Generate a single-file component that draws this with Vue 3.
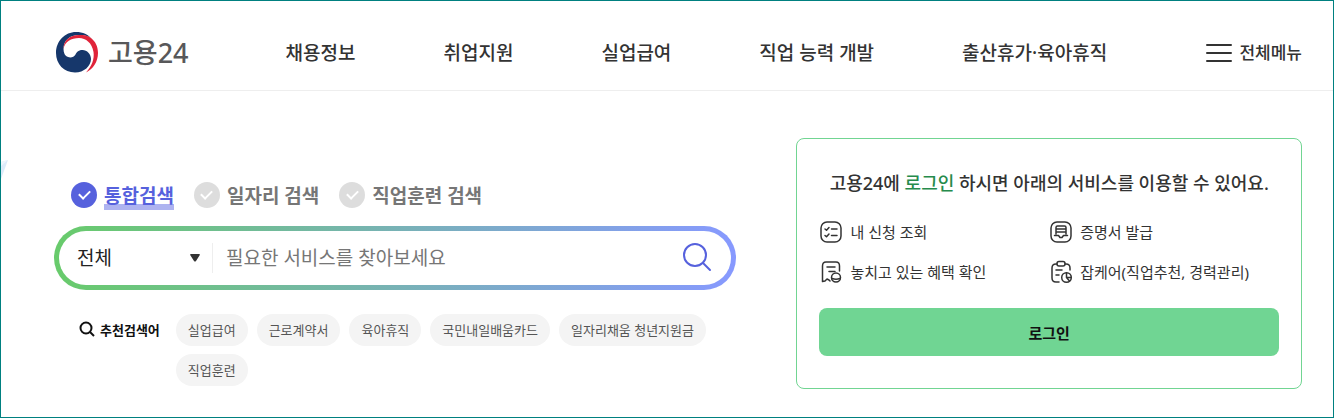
<template>
  <div class="page">
    <header class="header">
      <a href="#" class="logo">
        <svg class="logo-mark" viewBox="0 0 42 42" aria-hidden="true">
          <path fill="#16376b" d="M36 7C32 2.500 27 0 20 0C9 0 0 9 0 21C0 32 8 40.500 19 40.500C28 40.500 35 34 35 27C35 22 31 18 26.500 18C22 18 20.500 20.500 19.500 22.500C18 25 15 26 12 25C9 24 7.500 21 7.500 17C7.500 8 14 3 23 3C29 3 33 4 36 7Z" />
          <path fill="#e0243a" d="M7.500 17C7.500 8 14 3 23 3C28 3 32 3.500 35 6C39.500 9.500 42 14.500 42 21C42 30 37 37 30 40.500C36 34 38.500 27 37.500 20C36 11 30 6 23 6C15 6 9 9.500 7.500 17Z" />
        </svg>
        <span class="logo-text">고용24</span>
      </a>
      <nav class="nav">
        <a v-for="item in menus" :key="item" href="#" class="nav-link">{{ item }}</a>
      </nav>
      <button type="button" class="all-menu">
        <svg class="all-menu-icon" viewBox="0 0 28 20" aria-hidden="true">
          <path d="M2 2H26M2 10H26M2 18H26" />
        </svg>
        전체메뉴
      </button>
    </header>

    <svg class="deco" viewBox="0 0 7 20" aria-hidden="true">
      <path fill="#dcebfa" d="M0 2L7 0L0 19Z" />
      <path fill="#eef5fd" d="M0 2L7 0L0 6Z" />
    </svg>

    <main class="main">
      <section class="search">
        <div class="search-types">
          <label
            v-for="type in searchTypes"
            :key="type"
            class="search-type"
            :class="{ active: selectedType === type }"
          >
            <input v-model="selectedType" type="radio" name="searchType" :value="type" />
            <span>{{ type }}</span>
          </label>
        </div>

        <form class="search-box" @submit.prevent>
          <div class="category">
            <select v-model="category" aria-label="검색 분류">
              <option value="all">전체</option>
            </select>
            <svg class="category-arrow" viewBox="0 0 10 8" aria-hidden="true">
              <path d="M1 0H9Q10.500 0 9.500 1.500L6 7Q5 8 4 7L0.500 1.500Q-0.500 0 1 0Z" />
            </svg>
          </div>
          <input v-model="keyword" class="search-input" type="text" aria-label="검색어" placeholder="필요한 서비스를 찾아보세요" />
          <button type="submit" class="search-btn" aria-label="검색">
            <svg viewBox="0 0 30 30" aria-hidden="true">
              <circle cx="13" cy="13" r="11" />
              <path d="M21 21L28 28" />
            </svg>
          </button>
        </form>

        <div class="recommend">
          <strong class="recommend-title">
            <svg viewBox="0 0 16 16" aria-hidden="true">
              <circle cx="7" cy="7" r="5.500" />
              <path d="M11 11L15 15" />
            </svg>
            추천검색어
          </strong>
          <ul class="keywords">
            <li v-for="word in keywords" :key="word">
              <a href="#" class="keyword">{{ word }}</a>
            </li>
          </ul>
        </div>
      </section>

      <section class="login-card">
        <h2 class="login-title">고용24에 <em>로그인</em> 하시면 아래의 서비스를 이용할 수 있어요.</h2>
        <ul class="services">
          <li>
            <svg viewBox="0 0 24 24" aria-hidden="true">
              <rect x="2" y="2" width="20" height="20" rx="6" />
              <path d="M6 9L7.500 10.300L10 7.500M6 15.500L7.500 16.800L10 14M12.500 9H18M12.500 15.500H18" />
            </svg>
            내 신청 조회
          </li>
          <li>
            <svg viewBox="0 0 24 24" aria-hidden="true">
              <rect x="2" y="2" width="20" height="20" rx="6" />
              <path d="M7 14V7.500Q7 6 8.500 6H15.500Q17 6 17 7.500V14M7 9H17M7 12H17M5.500 15.500H9.500L11 17.500H13L14.500 15.500H18.500" />
            </svg>
            증명서 발급
          </li>
          <li>
            <svg viewBox="0 0 24 24" aria-hidden="true">
              <path d="M10 20L8 19L6 21L3.500 21.500V6Q3.500 2 7 2H17Q20.500 2 20.500 6V11M8 7H16M10 11.500H16M10 20L11 21" />
              <circle cx="17" cy="17.500" r="4.500" />
              <path d="M13 18.500Q17 20 21 18.500" />
            </svg>
            놓치고 있는 혜택 확인
          </li>
          <li>
            <svg viewBox="0 0 24 24" aria-hidden="true">
              <path d="M10 22H7Q3 22 3 18V8Q3 4 7 4H8M16 4H17Q21 4 21 8V10M7 10H13M7 15H10" />
              <rect x="8" y="1.500" width="8" height="4.500" rx="2" />
              <circle cx="17.500" cy="17.500" r="4.800" />
              <path d="M17.500 12.700V17.500H22.300M17.500 17.500L20.500 21" />
            </svg>
            잡케어(직업추천, 경력관리)
          </li>
        </ul>
        <button type="button" class="login-btn">로그인</button>
      </section>
    </main>
  </div>
</template>

<script setup>
import { ref } from 'vue'

const menus = ['채용정보', '취업지원', '실업급여', '직업 능력 개발', '출산휴가·육아휴직']
const searchTypes = ['통합검색', '일자리 검색', '직업훈련 검색']
const keywords = ['실업급여', '근로계약서', '육아휴직', '국민내일배움카드', '일자리채움 청년지원금', '직업훈련']

const selectedType = ref('통합검색')
const category = ref('all')
const keyword = ref('')
</script>

<style>
body {
  margin: 0;
  background: #fff;
}
</style>

<style scoped>
.page,
.page * {
  box-sizing: border-box;
}

.page {
  position: relative;
  min-height: 100vh;
  border: 1px solid #008080;
  background: #fff;
  color: #333;
  font-family: 'Noto Sans', 'Noto Sans CJK KR', sans-serif;
}

button,
input,
select {
  font-family: inherit;
}

a {
  color: inherit;
  text-decoration: none;
}

ul {
  margin: 0;
  padding: 0;
  list-style: none;
}

svg {
  display: block;
  flex-shrink: 0;
}

.header {
  display: flex;
  align-items: center;
  height: 90px;
  padding: 14px 31px 0 55px;
  border-bottom: 1px solid #eee;
  white-space: nowrap;
}

.logo {
  display: flex;
  align-items: center;
  gap: 10px;
}

.logo-mark {
  width: 42px;
  height: 42px;
}

.logo-text {
  color: #58585a;
  font-size: 27px;
  font-weight: 500;
  line-height: 40px;
}

.nav {
  display: flex;
  gap: 88px;
  margin-left: 97px;
}

.nav-link {
  font-size: 19px;
  font-weight: 500;
  line-height: 28px;
}

.all-menu {
  display: flex;
  align-items: center;
  gap: 6px;
  margin-left: auto;
  padding: 0;
  border: 0;
  background: none;
  color: #333;
  font-size: 17px;
  font-weight: 500;
  line-height: 28px;
  cursor: pointer;
}

.all-menu-icon {
  width: 28px;
  height: 20px;
  fill: none;
  stroke: #333;
  stroke-width: 2;
  stroke-linecap: round;
}

.deco {
  position: absolute;
  top: 159px;
  left: 0;
  width: 7px;
  height: 20px;
}

.main {
  display: grid;
  grid-template-columns: 27fr 20fr;
  gap: 60px;
  align-items: start;
  padding: 47px 31px 28px 53px;
}

.search {
  padding-top: 42px;
}

.search-types {
  display: flex;
  gap: 20px;
  padding-left: 17px;
}

.search-type {
  display: flex;
  align-items: center;
  gap: 7px;
  color: #767676;
  font-size: 19px;
  font-weight: 700;
  line-height: 28px;
  cursor: pointer;
}

.search-type input {
  display: flex;
  justify-content: center;
  width: 26px;
  height: 26px;
  margin: 0;
  padding-top: 8px;
  border-radius: 50%;
  background: #ddd;
  appearance: none;
  cursor: pointer;
}

.search-type input::after {
  content: '';
  box-sizing: border-box;
  width: 11px;
  height: 7px;
  border-bottom: 2px solid #fff;
  border-left: 2px solid #fff;
  transform: rotate(-45deg);
}

.search-type span {
  padding-top: 2px;
}

.search-type.active {
  color: #5661dd;
}

.search-type.active input {
  background: #5661dd;
}

.search-type.active span {
  background: linear-gradient(#aeb3f0, #aeb3f0) 0 100% / 100% 6px no-repeat;
}

.search-box {
  display: flex;
  align-items: center;
  height: 64px;
  margin-top: 16px;
  padding: 0 19px 0 18px;
  border: 5px solid transparent;
  border-radius: 32px;
  background:
    linear-gradient(#fff, #fff) padding-box,
    linear-gradient(90deg, #68cb6b, #8799ff) border-box;
}

.category {
  display: flex;
  position: relative;
  align-items: center;
  width: 136px;
  height: 30px;
  border-right: 1px solid #eee;
}

.category select {
  width: 100%;
  height: 30px;
  padding: 0;
  border: 0;
  background: none;
  color: #222;
  font-size: 19px;
  appearance: none;
}

.category-arrow {
  position: absolute;
  right: 12px;
  width: 10px;
  height: 8px;
  fill: #333;
  pointer-events: none;
}

.search-input {
  flex: 1;
  min-width: 0;
  height: 40px;
  padding: 0 13px;
  border: 0;
  outline: 0;
  background: none;
  color: #222;
  font-size: 19px;
}

.search-input::placeholder {
  color: #767676;
}

.search-btn {
  padding: 0 0 2px;
  border: 0;
  background: none;
  cursor: pointer;
}

.search-btn svg {
  width: 30px;
  height: 30px;
  fill: none;
  stroke: #5661dd;
  stroke-width: 2;
  stroke-linecap: round;
}

.recommend {
  display: flex;
  gap: 16px;
  margin-top: 24px;
  padding-left: 25px;
}

.recommend-title {
  display: flex;
  align-items: center;
  gap: 5px;
  height: 30px;
  color: #111;
  font-size: 13px;
  font-weight: 700;
  white-space: nowrap;
}

.recommend-title svg {
  width: 16px;
  height: 16px;
  fill: none;
  stroke: #111;
  stroke-width: 2;
}

.keywords {
  display: flex;
  flex-wrap: wrap;
  gap: 8px 9px;
}

.keyword {
  display: block;
  padding: 0 12px;
  border-radius: 16px;
  background: #f4f4f4;
  color: #555;
  font-size: 13px;
  line-height: 32px;
}

.login-card {
  padding: 30px 22px 32px;
  border: 1px solid #71d592;
  border-radius: 8px;
}

.login-title {
  margin: 0;
  font-size: 18px;
  font-weight: 500;
  line-height: 28px;
  text-align: center;
  white-space: nowrap;
}

.login-title em {
  color: #268b4c;
  font-style: normal;
}

.services {
  display: grid;
  grid-template-columns: 1fr 1fr;
  gap: 16px 0;
  margin-top: 23px;
}

.services li {
  display: flex;
  align-items: center;
  gap: 7px;
  font-size: 15px;
  line-height: 24px;
  white-space: nowrap;
}

.services svg {
  width: 24px;
  height: 24px;
  fill: none;
  stroke: #333;
  stroke-width: 1.500;
  stroke-linecap: round;
  stroke-linejoin: round;
}

.login-btn {
  display: block;
  width: 100%;
  height: 48px;
  margin-top: 24px;
  border: 0;
  border-radius: 8px;
  background: #70d593;
  color: #111;
  font-size: 15px;
  font-weight: 700;
  cursor: pointer;
}
</style>
